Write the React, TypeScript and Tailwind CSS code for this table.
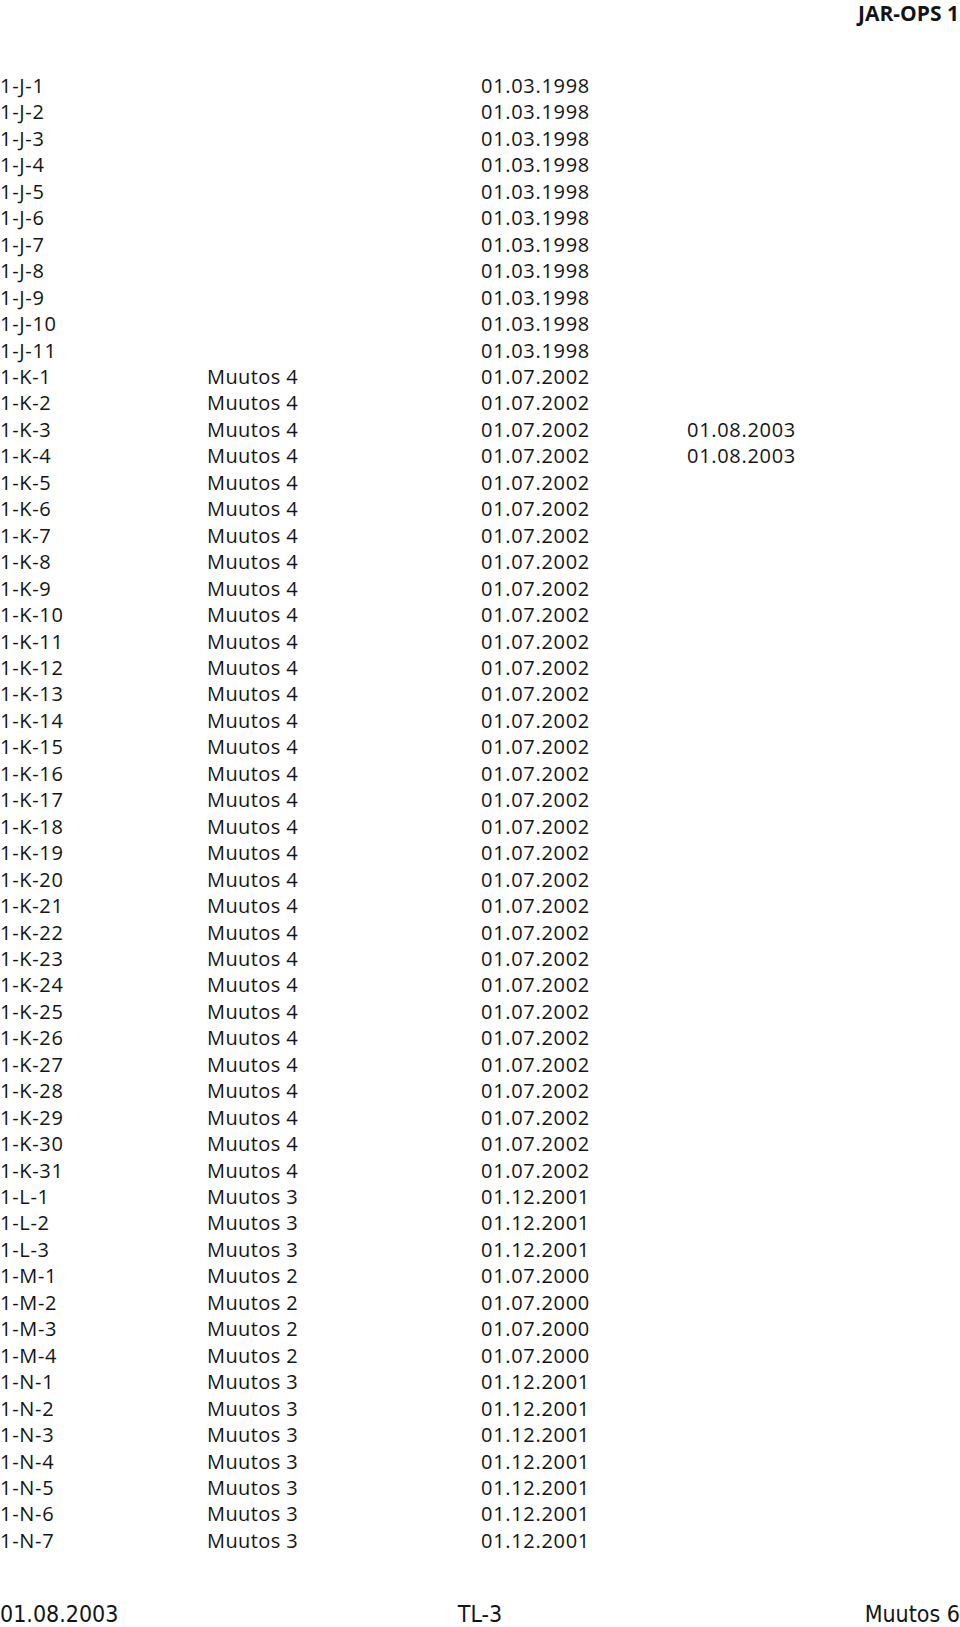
import React from "react";

type Row = [string, string, string, string];

const rows: Row[] = [
  ...Array.from({ length: 11 }, (_, i): Row => [`1-J-${i + 1}`, "", "01.03.1998", ""]),
  ...Array.from({ length: 31 }, (_, i): Row => [
    `1-K-${i + 1}`,
    "Muutos 4",
    "01.07.2002",
    i === 2 || i === 3 ? "01.08.2003" : "",
  ]),
  ...Array.from({ length: 3 }, (_, i): Row => [`1-L-${i + 1}`, "Muutos 3", "01.12.2001", ""]),
  ...Array.from({ length: 4 }, (_, i): Row => [`1-M-${i + 1}`, "Muutos 2", "01.07.2000", ""]),
  ...Array.from({ length: 7 }, (_, i): Row => [`1-N-${i + 1}`, "Muutos 3", "01.12.2001", ""]),
];

export default function App() {
  return (
    <div className="relative h-[1627px] w-[960px] overflow-hidden bg-white text-[#141414] font-['Open_Sans',sans-serif]">
      {/* Page header */}
      <div className="flex h-[26px] justify-end pr-[1px] text-[21px] font-bold leading-[26px]">
        JAR-OPS 1
      </div>

      {/* Table */}
      <div className="mt-[47px]">
        {rows.map((r) => (
          <div
            key={r[0]}
            className="grid h-[26.46px] grid-cols-[207px_274px_206px_1fr] text-[20px] leading-[26.46px] tracking-[0.7px]"
          >
            <span>{r[0]}</span>
            <span className="tracking-[0.4px]">{r[1]}</span>
            <span>{r[2]}</span>
            <span>{r[3]}</span>
          </div>
        ))}
      </div>

      {/* Footer */}
      <div className="mt-[47px] grid h-[26px] grid-cols-3 text-[23px] leading-[26px] font-['DejaVu_Sans',sans-serif] font-stretch-condensed [font-stretch:condensed]">
        <span>01.08.2003</span>
        <span className="text-center">TL-3</span>
        <span className="text-right">Muutos 6</span>
      </div>
    </div>
  );
}
